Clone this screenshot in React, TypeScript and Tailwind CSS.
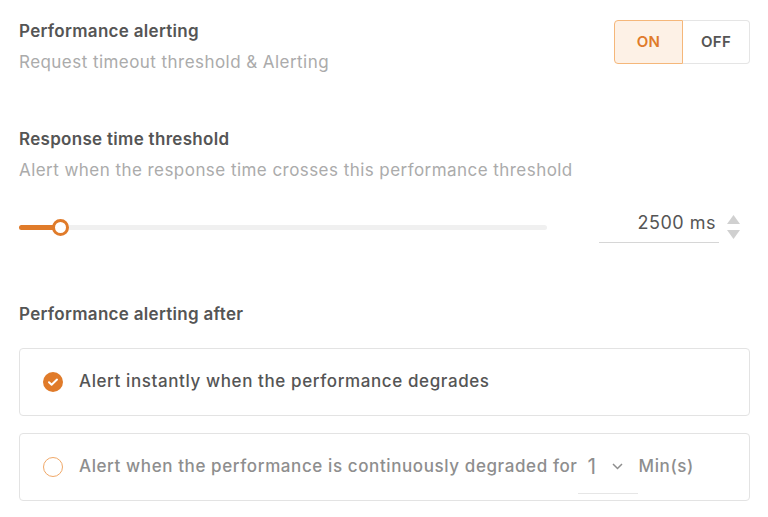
import React from "react";

const font = { fontFamily: "Inter, 'Noto Sans', sans-serif" };

function Heading({ title, sub }: { title: string; sub?: string }) {
  return (
    <div className="flex flex-col gap-[11px]">
      <h3 className="text-[17px] leading-[20px] font-semibold tracking-[0.3px] text-[#555]">{title}</h3>
      {sub && <p className="text-[17px] leading-[20px] tracking-[0.45px] text-[#ababab]">{sub}</p>}
    </div>
  );
}

export default function App() {
  return (
    <div style={font} className="w-[768px] h-[517px] bg-white overflow-hidden pl-[19px] pr-[18px] pt-[20px]">
      {/* alerting toggle */}
      <div className="flex justify-between items-start">
        <div className="pt-[1px]">
          <Heading title="Performance alerting" sub="Request timeout threshold & Alerting" />
        </div>
        <div className="flex h-[44px] text-[15px] font-semibold tracking-[0.3px]">
          <button className="w-[69px] rounded-l-[4px] border border-[#f5b77a] bg-[#fdf1e6] text-[#e07b2a]">ON</button>
          <button className="w-[67px] rounded-r-[4px] border border-l-0 border-[#e5e5e5] bg-white text-[#555]">OFF</button>
        </div>
      </div>

      {/* response time */}
      <div className="mt-[57px]">
        <Heading title="Response time threshold" sub="Alert when the response time crosses this performance threshold" />
        <div className="flex items-center mt-[31px]">
          <div className="relative w-[528px] h-[5px] rounded-full bg-[#f0f0f0]">
            <div className="absolute left-0 top-0 h-[5px] w-[41px] rounded-full bg-[#e07b2a]" />
            <div className="absolute left-[33px] top-[-6px] w-[17px] h-[17px] rounded-full bg-white border-[3px] border-[#e07b2a]" />
          </div>
          <div className="ml-[52px] w-[120px] border-b border-[#d6d6d6] pb-[7px] leading-[24px] text-right pr-[3px] text-[18px] tracking-[0.5px] text-[#555]">
            2500 ms
          </div>
          <div className="ml-[8px] flex flex-col gap-[6px] items-center text-[#d0d0d0]">
            <svg width="13" height="9" viewBox="0 0 13 9"><path d="M6.5 0L13 9H0z" fill="currentColor" /></svg>
            <svg width="13" height="9" viewBox="0 0 13 9"><path d="M0 0H13L6.5 9z" fill="currentColor" /></svg>
          </div>
        </div>
      </div>

      {/* alerting after */}
      <div className="mt-[61px]">
        <Heading title="Performance alerting after" />
        <div className="mt-[24px] flex flex-col gap-[17px]">
          <div className="h-[68px] flex items-center border border-[#e3e3e3] rounded-[4px] px-[23px] gap-[16px]">
            <svg width="20" height="20" viewBox="0 0 20 20">
              <circle cx="10" cy="10" r="10" fill="#e07b2a" />
              <path d="M6 10.2l2.6 2.5L14 7.6" stroke="#fff" strokeWidth="2" fill="none" strokeLinecap="round" strokeLinejoin="round" />
            </svg>
            <span className="text-[17px] font-medium tracking-[0.6px] text-[#555]">Alert instantly when the performance degrades</span>
          </div>
          <div className="h-[68px] flex items-center border border-[#e3e3e3] rounded-[4px] px-[23px]">
            <span className="w-[20px] h-[20px] rounded-full border-[1.5px] border-[#f0a868]" />
            <span className="ml-[16px] text-[17px] font-medium tracking-[0.6px] text-[#8e8e8e]">Alert when the performance is continuously degraded for</span>
            <div className="flex items-center w-[60px] h-[54px] border-b border-[#e6e6e6]">
              <span className="ml-[10px] text-[21px] text-[#8e8e8e]">1</span>
              <svg className="ml-[16px]" width="11" height="7" viewBox="0 0 11 7"><path d="M1 1l4.5 4.5L10 1" stroke="#8e8e8e" strokeWidth="1.5" fill="none" /></svg>
            </div>
            <span className="ml-[1px] text-[17px] font-medium tracking-[0.6px] text-[#8e8e8e]">Min(s)</span>
          </div>
        </div>
      </div>
    </div>
  );
}
